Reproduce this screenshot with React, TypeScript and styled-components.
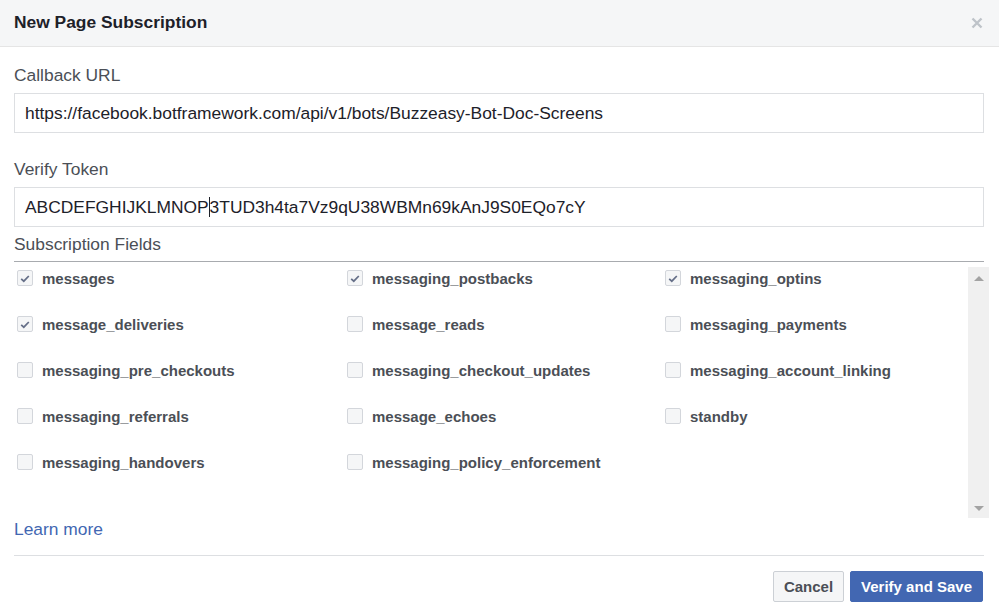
import React from 'react';
import styled, { createGlobalStyle } from 'styled-components';

const GlobalStyle = createGlobalStyle`
  html, body {
    margin: 0;
    padding: 0;
    background: #fff;
    font-family: "Liberation Sans", Arial, sans-serif;
  }
`;

const Dialog = styled.div`
  width: 999px;
  height: 616px;
  background: #fff;
  display: flex;
  flex-direction: column;
  overflow: hidden;
`;

const Header = styled.div`
  height: 47px;
  background: #f5f6f7;
  border-bottom: 1px solid #e5e5e5;
  display: flex;
  align-items: center;
  justify-content: space-between;
  padding: 0 14px;
  box-sizing: border-box;
  flex-shrink: 0;
`;

const Title = styled.div`
  font-size: 17.4px;
  font-weight: 700;
  color: #1d2129;
  margin-top: -2px;
`;

const Close = styled.div`
  width: 14px;
  height: 14px;
  margin-right: 1px;
  display: flex;
  align-items: center;
  justify-content: center;
`;

const Body = styled.div`
  padding: 0 15px 0 14px;
  display: flex;
  flex-direction: column;
`;

const Label = styled.div<{ $top: number }>`
  font-size: 17.4px;
  color: #4b4f56;
  line-height: 20px;
  margin-top: ${(p) => p.$top}px;
`;

const Input = styled.div`
  height: 40px;
  margin-top: 8px;
  border: 1px solid #dddfe2;
  box-sizing: border-box;
  display: flex;
  align-items: center;
  padding-left: 10px;
  font-size: 17.4px;
  color: #1d2129;
  white-space: nowrap;
`;

const Caret = styled.span`
  display: inline-block;
  width: 1px;
  height: 20px;
  background: #1d2129;
  vertical-align: -3px;
`;

const SectionLabel = styled.div`
  font-size: 17.4px;
  color: #4b4f56;
  line-height: 20px;
  margin-top: 7px;
  padding-bottom: 7px;
  border-bottom: 1px solid #a8abaf;
`;

const FieldsArea = styled.div`
  display: flex;
  height: 256px;
`;

const FieldsGrid = styled.div`
  flex: 1;
  display: grid;
  grid-template-columns: 330px 318px 1fr;
  grid-auto-rows: 46px;
  padding: 4px 0 0 3px;
  align-content: start;
`;

const Field = styled.label`
  display: flex;
  align-items: center;
  gap: 9px;
  height: 24px;
  font-size: 15px;
  font-weight: 700;
  color: #4b4f56;
`;

const Box = styled.span`
  width: 16px;
  height: 16px;
  box-sizing: border-box;
  border: 1px solid #d3d6db;
  border-radius: 2px;
  background: #f5f6f7;
  display: flex;
  align-items: center;
  justify-content: center;
`;

const Scrollbar = styled.div`
  width: 21px;
  margin: 5px -5px 0 0;
  background: #f0f0f0;
  display: flex;
  flex-direction: column;
  justify-content: space-between;
  align-items: center;
  padding: 9px 0 7px;
  box-sizing: border-box;
  height: 251px;
`;

const Arrow = styled.div<{ $down?: boolean }>`
  width: 0;
  height: 0;
  border-left: 5px solid transparent;
  border-right: 5px solid transparent;
  ${(p) =>
    p.$down
      ? 'border-top: 5px solid #a3a3a3;'
      : 'border-bottom: 5px solid #a3a3a3;'}
`;

const LearnMore = styled.a`
  font-size: 17.4px;
  color: #4267b2;
  text-decoration: none;
  line-height: 20px;
  margin-top: 1px;
  padding-bottom: 16px;
  border-bottom: 1px solid #dddfe2;
`;

const Footer = styled.div`
  display: flex;
  justify-content: flex-end;
  gap: 6px;
  padding-top: 15px;
`;

const Button = styled.button<{ $primary?: boolean }>`
  height: 31px;
  padding: 0 10px;
  font-family: inherit;
  font-size: 15px;
  font-weight: 700;
  border-radius: 2px;
  border: 1px solid ${(p) => (p.$primary ? '#4267b2' : '#ccd0d5')};
  background: ${(p) => (p.$primary ? '#4267b2' : '#f5f6f7')};
  color: ${(p) => (p.$primary ? '#fff' : '#4b4f56')};
  margin-right: ${(p) => (p.$primary ? '1px' : '0')};
`;

const fields: [string, boolean][] = [
  ['messages', true],
  ['messaging_postbacks', true],
  ['messaging_optins', true],
  ['message_deliveries', true],
  ['message_reads', false],
  ['messaging_payments', false],
  ['messaging_pre_checkouts', false],
  ['messaging_checkout_updates', false],
  ['messaging_account_linking', false],
  ['messaging_referrals', false],
  ['message_echoes', false],
  ['standby', false],
  ['messaging_handovers', false],
  ['messaging_policy_enforcement', false],
];

const Check = () => (
  <svg width="10" height="9" viewBox="0 0 10 9">
    <path d="M1.2 4.8 L3.8 7.2 L8.8 2" fill="none" stroke="#656f88" strokeWidth="1.7" />
  </svg>
);

const App: React.FC = () => {
  return (
    <>
      <GlobalStyle />
      <Dialog>
        <Header>
          <Title>New Page Subscription</Title>
          <Close>
            <svg width="12" height="12" viewBox="0 0 12 12">
              <path d="M1.5 1.5 L10.5 10.5 M10.5 1.5 L1.5 10.5" stroke="#bec3c9" strokeWidth="2.4" />
            </svg>
          </Close>
        </Header>
        <Body>
          <Label $top={18}>Callback URL</Label>
          <Input>https://facebook.botframework.com/api/v1/bots/Buzzeasy-Bot-Doc-Screens</Input>
          <Label $top={26}>Verify Token</Label>
          <Input>
            ABCDEFGHIJKLMNOP<Caret />3TUD3h4ta7Vz9qU38WBMn69kAnJ9S0EQo7cY
          </Input>
          <SectionLabel>Subscription Fields</SectionLabel>
          <FieldsArea>
            <FieldsGrid>
              {fields.map(([name, checked]) => (
                <Field key={name}>
                  <Box>{checked && <Check />}</Box>
                  {name}
                </Field>
              ))}
            </FieldsGrid>
            <Scrollbar>
              <Arrow />
              <Arrow $down />
            </Scrollbar>
          </FieldsArea>
          <LearnMore href="#">Learn more</LearnMore>
          <Footer>
            <Button>Cancel</Button>
            <Button $primary>Verify and Save</Button>
          </Footer>
        </Body>
      </Dialog>
    </>
  );
};

export default App;
